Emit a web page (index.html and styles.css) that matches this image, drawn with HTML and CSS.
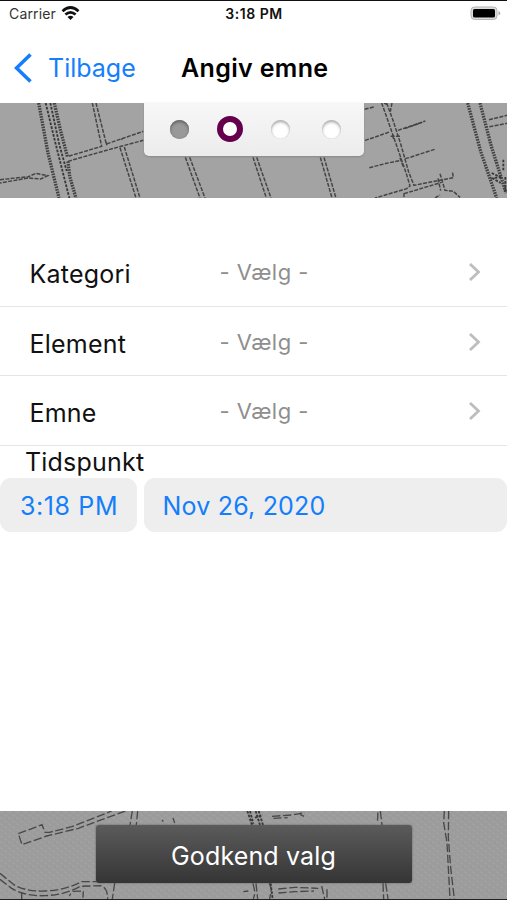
FILE: index.html
```html
<!DOCTYPE html>
<html lang="da">
<head>
<meta charset="utf-8">
<title>Angiv emne</title>
<link rel="stylesheet" href="styles.css">
</head>
<body>
<div class="screen">
  <div class="status">
    <div class="carrier"><span>Carrier</span>
      <svg class="wifi" viewBox="0 0 18 14"><g fill="none" stroke="#111" stroke-width="2.7"><path d="M1 5.2Q9-2.2 17 5.2"/><path d="M3.9 8.6Q9 4.1 14.1 8.6"/></g><path d="M6 11Q9 8.4 12 11L9 14Z" fill="#111"/></svg>
    </div>
    <span class="clock">3:18 PM</span>
    <svg class="battery" viewBox="0 0 31 15"><rect x="1" y="1" width="26" height="12.5" rx="3.5" fill="#ddd" stroke="#b5b5b5"/><rect x="3" y="3" width="22" height="8.5" rx="1.5"/><path d="M28.5 5Q32 7.2 28.5 9.5Z" fill="#aaa"/></svg>
  </div>
  <header class="nav">
    <a class="back"><svg viewBox="0 0 18 30"><path d="M16.5 1.5L2.5 15L16.5 28.5"/></svg><span>Tilbage</span></a>
    <h1>Angiv emne</h1>
  </header>
  <div class="map map-top">
    <svg class="streets" viewBox="0 0 1521 285" preserveAspectRatio="none">
      <g class="rail"><path d="M116 0L144 150L177 285M163 0L181 80L202 160M204 175L209 220L228 285"/><path d="M1403 0L1442 145L1490 285M1440 0L1474 130L1518 270"/></g>
      <g class="dense"><path d="M137 0L165 115L208 285M151 0L178 125L200 204"/><path d="M1510 170V206M1516 222V266M1475 210L1500 222L1478 226L1502 240"/></g>
      <g class="road">
        <path d="M277 0L305 130L208 159L200 159M288 0L319 123L430 85M204 175L238 165L355 132L430 112M360 134L408 285M373 132L420 285M321 127L316 112M370 105L364 110"/>
        <path d="M0 230L85 221L108 211L143 218L122 228L85 225L0 240"/>
        <path d="M556 163L600 285M569 163L615 285M759 163L799 285M770 163L813 285M961 163L996 285M972 163L1008 285"/>
        <path d="M1145 0L1175 85L1220 215L1230 249L1220 257L1125 285M1160 0L1180 55L1203 126L1226 207L1242 247L1360 224L1357 205M1152 0L1160 4M1176 0L1171 26"/>
        <path d="M1095 112L1126 102L1168 87M1194 82L1276 54M1214 77L1267 58M1108 194L1160 181L1198 173M1216 167L1227 164L1307 138M1094 19L1125 11M1172 100L1202 100M1178 96L1181 109M1200 164L1211 194"/>
        <path d="M1212 272L1325 238M1320 212L1325 228L1335 262L1360 265L1380 283M1314 226L1322 263M1212 270V285M1305 285L1320 276"/>
        <path d="M1467 50L1521 37M1468 71L1521 61"/>
      </g>
    </svg>
    <div class="steps"><i class="dot done"></i><i class="dot current"></i><i class="dot"></i><i class="dot"></i></div>
  </div>
  <main>
    <div class="row"><span class="label kategori">Kategori</span><span class="value">- Vælg -</span><svg class="chev" viewBox="0 0 13 20"><path d="M2 2L10.5 10L2 18"/></svg></div>
    <div class="row"><span class="label element">Element</span><span class="value">- Vælg -</span><svg class="chev" viewBox="0 0 13 20"><path d="M2 2L10.5 10L2 18"/></svg></div>
    <div class="row"><span class="label emne">Emne</span><span class="value">- Vælg -</span><svg class="chev" viewBox="0 0 13 20"><path d="M2 2L10.5 10L2 18"/></svg></div>
    <div class="time-title"><span>Tidspunkt</span></div>
    <div class="pickers"><div class="pill time"><span>3:18 PM</span></div><div class="pill date"><span>Nov 26, 2020</span></div></div>
  </main>
  <footer class="map map-bottom">
    <svg class="streets" viewBox="0 0 1521 264" preserveAspectRatio="none">
      <defs><pattern id="grain" width="24" height="18" patternUnits="userSpaceOnUse"><path d="M1 2L9 6M13 11L21 15" stroke="#a5a5a5" stroke-width="3"/></pattern></defs>
      <rect width="1521" height="264" fill="url(#grain)"/>
      <g class="road wide">
        <path d="M55 68L126 41L135 64L148 64L215 47L335 0M376 0L235 52L140 75L66 101L55 68"/>
        <path d="M397 0L390 42M413 0L409 42M486 27L490 32M519 21L524 36"/>
        <path d="M0 187L40 220Q75 242 135 240T245 212L290 212M0 205L35 232Q75 256 135 254T240 226L300 224Q323 228 323 264M65 246V264M344 216L337 264M208 255L212 248M218 241L250 240L249 260"/>
        <path d="M816 16L875 12L915 5M820 22L863 20M900 10L912 16M1134 4L1132 35M1141 0L1146 42"/>
        <path d="M835 234L884 229L955 232M835 246L884 242L942 240M965 225L974 264M981 235V264M1149 217L1151 264M1157 217L1164 264M730 242L745 240"/>
        <path d="M1333 0L1331 35L1341 95L1345 170L1350 264M1346 0L1345 80L1352 170L1363 264"/>
        <path d="M759 217L765 245L760 264M768 217L773 264M808 217L814 235L809 264"/>
      </g>
      <g class="dense"><path d="M742 0L756 42M750 0L760 38M767 0L780 42M776 0L789 42M765 20L788 12M812 217L818 264"/></g>
    </svg>
    <button class="submit"><span>Godkend valg</span></button>
  </footer>
</div>
</body>
</html>
```
FILE: styles.css
```css
* { box-sizing: border-box; }
body { margin: 0; background: #fff; font-family: Inter, "Liberation Sans", sans-serif; color: #111; }
.screen { width: 507px; height: 900px; display: flex; flex-direction: column; overflow: hidden; border-top: 1px solid #111; border-bottom: 1px solid #222; }
span, h1 { white-space: nowrap; }
.status { height: 32px; flex: none; display: grid; grid-template-columns: 1fr auto 1fr; align-items: start; line-height: 16px; padding: 5px 6px 0 9px; font-size: 14px; }
.carrier { display: flex; gap: 5px; color: #333; letter-spacing: .15px; }
.wifi { width: 19px; height: 14px; }
.clock { font-weight: 600; font-size: 14px; letter-spacing: .55px; margin-right: 2px; }
.battery { width: 31px; height: 15px; justify-self: end; }
.nav { height: 69.5px; flex: none; display: grid; grid-template-columns: 181px 1fr; align-items: center; padding-top: 1px; }
.back { display: flex; align-items: center; gap: 16px; padding-left: 14px; color: #147efb; font-size: 25px; }
.back svg { width: 18px; height: 30px; fill: none; stroke: #147efb; stroke-width: 3.6; }
h1 { margin: 0; font-size: 25px; font-weight: 600; color: #000; letter-spacing: .35px; }
.map { position: relative; flex: none; background: #a3a3a3; display: flex; justify-content: center; }
.map-top { height: 95px; margin-bottom: 39.5px; align-items: flex-start; }
.map-bottom { height: 88px; margin-top: auto; background: #9c9c9c; padding-top: 14px; align-items: flex-start; }
.streets { position: absolute; inset: 0; width: 100%; height: 100%; }
.road { fill: none; stroke: #444; stroke-width: 4.4; stroke-dasharray: 12 4; }
.wide { stroke-width: 4; stroke: #484848; stroke-dasharray: 25 8; }
.dense { fill: none; stroke: #383838; stroke-width: 5.5; stroke-dasharray: 8 4; }
.rail { fill: none; stroke: #424242; stroke-width: 10; stroke-dasharray: 5 3; }
.steps { position: relative; width: 220px; height: 53.5px; border-radius: 0 0 5px 5px; background: linear-gradient(#f7f7f7, #ececec); box-shadow: 0 1px 2px #888; display: grid; grid-template-columns: repeat(4, 50.6px); align-items: center; justify-items: center; padding-left: 11px; }
.dot { width: 19px; height: 19px; border-radius: 50%; background: #fff; box-shadow: inset 0 2px 3px #aaa, inset 0 0 1px #bbb; }
.done { background: #999; box-shadow: inset 0 2px 3px #666, inset 0 0 1px #777; }
.current { width: 26px; height: 26px; border: 6.5px solid #65004d; box-shadow: none; }
.row { height: 69.5px; border-bottom: 1.5px solid #e5e5e5; display: grid; grid-template-columns: 190px 1fr 13px; align-items: center; padding: 2px 26px 0 29.5px; }
.label { font-size: 25px; padding-top: 4px; letter-spacing: .22px; }
.value { font-size: 22px; color: #8e8e8e; letter-spacing: .45px; }
.chev { width: 13px; height: 20px; fill: none; stroke: #bdbdbd; stroke-width: 2.8; }
.time-title { height: 32px; line-height: 33px; padding-left: 25px; font-size: 25px; letter-spacing: .2px; }
.pickers { display: grid; grid-template-columns: 137px 1fr; gap: 6.5px; }
.pill { height: 54px; border-radius: 11px; background: #eee; color: #147efb; font-size: 25px; line-height: 56px; padding-left: 20px; letter-spacing: .6px; }
.date { padding-left: 19px; letter-spacing: .2px; }
.submit { position: relative; width: 316px; height: 58px; border: 0; border-radius: 3px; background: linear-gradient(#5b5b5b, #353535); box-shadow: 0 0 2px #555; color: #fff; font: 25px/58px Inter, sans-serif; letter-spacing: .15px; padding: 2px 0 0; }
```
